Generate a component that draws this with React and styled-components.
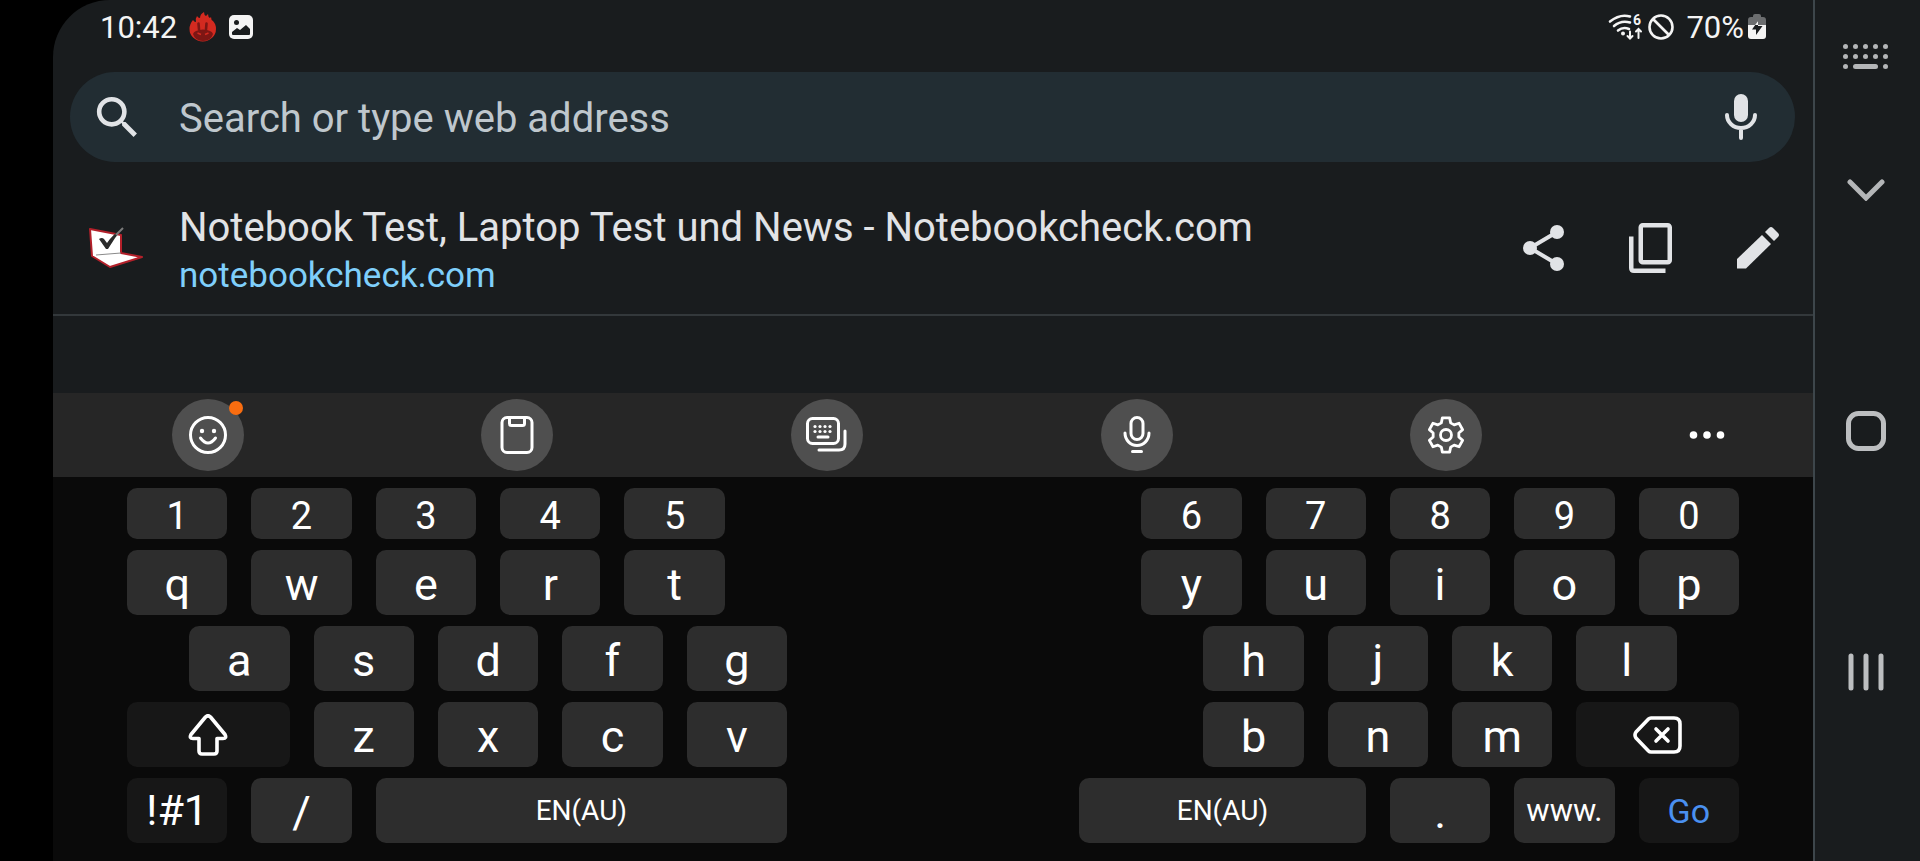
import React, {useState} from 'react';
import styled, {createGlobalStyle} from 'styled-components';


const leftKeys = [
    [
        {label: "1", col: 1, small: true}, {label: "2", col: 3, small: true}, {label: "3", col: 5, small: true},
        {label: "4", col: 7, small: true}, {label: "5", col: 9, small: true},
    ],
    [{label: "q", col: 1}, {label: "w", col: 3}, {label: "e", col: 5}, {label: "r", col: 7}, {label: "t", col: 9}],
    [{label: "a", col: 2}, {label: "s", col: 4}, {label: "d", col: 6}, {label: "f", col: 8}, {label: "g", col: 10}],
    [
        {label: "Shift", icon: "shift", col: 1, span: 3, dark: true},
        {label: "z", col: 4}, {label: "x", col: 6}, {label: "c", col: 8}, {label: "v", col: 10},
    ],
    [
        {label: "!#1", col: 1, dark: true, size: 43},
        {label: "/", col: 3},
        {label: "EN(AU)", col: 5, span: 7, size: 28},
    ],
];

const rightKeys = [
    [
        {label: "6", col: 2, small: true}, {label: "7", col: 4, small: true}, {label: "8", col: 6, small: true},
        {label: "9", col: 8, small: true}, {label: "0", col: 10, small: true},
    ],
    [{label: "y", col: 2}, {label: "u", col: 4}, {label: "i", col: 6}, {label: "o", col: 8}, {label: "p", col: 10}],
    [{label: "h", col: 3}, {label: "j", col: 5}, {label: "k", col: 7}, {label: "l", col: 9}],
    [
        {label: "b", col: 3}, {label: "n", col: 5}, {label: "m", col: 7},
        {label: "Backspace", icon: "backspace", col: 9, span: 3, dark: true},
    ],
    [
        {label: "EN(AU)", col: 1, span: 5, size: 28},
        {label: ".", col: 6},
        {label: "www.", col: 8, size: 31},
        {label: "Go", col: 10, dark: true, size: 34, color: "#4a90f0"},
    ],
];

// six teeth, one every 60 degrees
const gearPoints = () => {
    const points = [];
    for (let i = 0; i < 6; i++) {
        [[13, -21], [17.5, -12], [17.5, 12], [13, 21]].forEach(([r, offset]) => {
            const a = (i * 60 + offset - 90) * Math.PI / 180;
            points.push((20 + r * Math.cos(a)).toFixed(2) + "," + (20 + r * Math.sin(a)).toFixed(2));
        })
    }
    return points.join(" ");
}

const FlameIcon = () => (
    <svg width="28" height="30" viewBox="0 0 28 30" aria-hidden="true">
        <path d="M4 8q1 2 3 2-1-3 1-6 1 2 3 2 0-4 4-6 0 3 2 4l2-2q0 3 2 4l1-1q0 3 2 4 3 3 3 8a13.200 12.500 0 0 1-26.500 0q0-5 3.500-9z" fill="#d32a20"/>
        <path d="M4 22q1-4 10-4.500 9 .5 10 4.500-2 7-10 7T4 22z" fill="#7d1614"/>
        <path d="M9.500 11.500l.5 6M17.500 11.500l-.5 6" stroke="#7d1614" strokeWidth="2.600" strokeLinecap="round"/>
        <path d="M8.500 21l3.500 1.500M19.500 21L16 22.500" stroke="#d32a20" strokeWidth="1.500" fill="none"/>
    </svg>
)

const PictureIcon = () => (
    <svg width="24" height="24" viewBox="0 0 24 24" aria-hidden="true">
        <rect width="24" height="24" rx="5" fill="#f4f4f4"/>
        <circle cx="7.500" cy="7.500" r="2.500" fill="#191c1e"/>
        <path d="M3 19v-2l5-4 3 2 6-5 4 4v5q0 1-1 1H4q-1 0-1-1z" fill="#191c1e"/>
    </svg>
)

const WifiIcon = () => (
    <svg width="36" height="36" viewBox="0 -4 36 36" fill="none" stroke="#f4f4f4" strokeLinecap="round" aria-hidden="true">
        <path d="M2 8.500Q12 .5 22 3.500M6 13q7-6 16-3.500M10 17.500q5-4 11-1.500" strokeWidth="2.600"/>
        <circle cx="15" cy="20.500" r="2" fill="#f4f4f4" stroke="none"/>
        <path d="M22 18.500v6.500M19.500 23l2.500 2.500 2.500-2.500M30.500 25v-8M28 18.500l2.500-2.500 2.500 2.500" strokeWidth="2"/>
        <text x="25" y="12" fontSize="14" fontWeight="700" fill="#f4f4f4" stroke="none">6</text>
    </svg>
)

const BlockedIcon = () => (
    <svg width="26" height="26" viewBox="0 0 26 26" fill="none" stroke="#f4f4f4" strokeWidth="2.600" aria-hidden="true">
        <circle cx="13" cy="13" r="11.500"/>
        <path d="M5 5l16 16"/>
    </svg>
)

const BatteryIcon = () => (
    <svg width="18" height="26" viewBox="0 0 18 26" aria-hidden="true">
        <path d="M5 3V2q0-2 2-2h4q2 0 2 2v1h2q3 0 3 3v5H0V6q0-3 3-3z" fill="#6b6d6f"/>
        <path d="M0 11h18v11q0 3-3 3H3q-3 0-3-3z" fill="#f4f4f4"/>
        <path d="M10 7v5h4.500L8 21v-5.500H4z" fill="#191c1e"/>
        <path d="M10 7v4H7z" fill="#f4f4f4"/>
    </svg>
)

const SearchIcon = () => (
    <svg width="55" height="55" viewBox="0 0 24 24" fill="#e1e3e6" aria-hidden="true">
        <path d="M15.500 14h-.79l-.28-.27A6.471 6.471 0 0 0 16 9.500 6.500 6.500 0 1 0 9.500 16c1.610 0 3.090-.59 4.230-1.570l.27.28v.79l5 4.990L20.490 19l-4.990-5zm-6 0C7.010 14 5 11.990 5 9.500S7.010 5 9.500 5 14 7.010 14 9.500 11.990 14 9.500 14z"/>
    </svg>
)

const VoiceIcon = () => (
    <svg width="32" height="46" viewBox="0 0 32 46" fill="none" stroke="#e1e3e6" strokeWidth="4" strokeLinecap="round" aria-hidden="true">
        <rect x="9" y="0" width="14" height="28" rx="7" fill="#e1e3e6" stroke="none"/>
        <path d="M2 21a14 13 0 0 0 28 0M16 35v9"/>
    </svg>
)

const LaptopLogo = () => (
    <svg width="56" height="42" viewBox="-1 -1 56 42" aria-hidden="true">
        <path d="M1 1l31 6v18l21 4-32 10L3 28z" fill="#fff" stroke="#b3202a" strokeWidth="2" strokeLinejoin="round"/>
        <path d="M7 27l25-2" stroke="#8a8a8a" strokeWidth="1"/>
        <path d="M10 11q3-2 5 0l3 4Q24 6 34 0q-8 9-15 21h-2z" fill="#2b2b2b"/>
        <path d="M27 7l7-7" stroke="#7b7b7b" strokeWidth="2"/>
    </svg>
)

const ShareIcon = () => (
    <svg width="42" height="46" viewBox="0 0 42 46" fill="#e1e3e6" aria-hidden="true">
        <path d="M34 7L7 23l27 16" fill="none" stroke="#e1e3e6" strokeWidth="4"/>
        <circle cx="7" cy="23" r="7"/>
        <circle cx="34" cy="7" r="7"/>
        <circle cx="34" cy="39" r="7"/>
    </svg>
)

const CopyIcon = () => (
    <svg width="44" height="50" viewBox="0 0 44 50" fill="none" stroke="#e1e3e6" strokeWidth="4.500" aria-hidden="true">
        <rect x="11.750" y="2.250" width="29" height="37" rx="2"/>
        <path d="M2.250 13.500V45q0 2.750 2.750 2.750h31.500"/>
    </svg>
)

const PencilIcon = () => (
    <svg width="42" height="42" viewBox="0 0 42 42" fill="#e1e3e6" aria-hidden="true">
        <path d="M0 32L25 8l9 9L9 41.500H0z"/>
        <path d="M28 5l4-4q2-2 4 0l5 5q2 2 0 4l-4 4z"/>
    </svg>
)

const SmileIcon = () => (
    <svg width="40" height="40" viewBox="0 0 40 40" fill="none" stroke="#fff" strokeWidth="3" strokeLinecap="round" aria-hidden="true">
        <circle cx="20" cy="20" r="17.500"/>
        <circle cx="14" cy="16" r="2.200" fill="#fff" stroke="none"/>
        <circle cx="26" cy="16" r="2.200" fill="#fff" stroke="none"/>
        <path d="M12.500 23q7.500 10 15 0"/>
    </svg>
)

const ClipboardIcon = () => (
    <svg width="34" height="38" viewBox="0 0 34 38" fill="none" stroke="#fff" strokeWidth="3" aria-hidden="true">
        <rect x="2" y="1.500" width="30" height="35" rx="5"/>
        <path d="M9.500 2v5.500q0 2 2 2h11q2 0 2-2V2"/>
    </svg>
)

const KeyboardsIcon = () => (
    <svg width="42" height="36" viewBox="0 0 42 36" fill="none" stroke="#fff" strokeWidth="3" strokeLinecap="round" aria-hidden="true">
        <rect x="1.500" y="1.500" width="31" height="25" rx="5"/>
        <path d="M39 14v13q0 6-6 6H13M12 20h10"/>
        {[9, 14, 19, 24].map(x => (
            <React.Fragment key={x}>
                <circle cx={x} cy="9.500" r="1.600" fill="#fff" stroke="none"/>
                <circle cx={x} cy="14.500" r="1.600" fill="#fff" stroke="none"/>
            </React.Fragment>
        ))}
    </svg>
)

const MicIcon = () => (
    <svg width="28" height="38" viewBox="0 0 28 38" fill="none" stroke="#fff" strokeWidth="3" strokeLinecap="round" aria-hidden="true">
        <rect x="8" y="1.500" width="12" height="22" rx="6"/>
        <path d="M2 17a12 12.500 0 0 0 24 0M9.500 35.500h9"/>
    </svg>
)

const GearIcon = () => (
    <svg width="40" height="40" viewBox="0 0 40 40" fill="none" stroke="#fff" strokeWidth="2.800" strokeLinejoin="round" aria-hidden="true">
        <polygon points={gearPoints()}/>
        <circle cx="20" cy="20" r="5.500"/>
    </svg>
)

const MoreIcon = () => (
    <svg width="36" height="10" viewBox="0 0 36 10" fill="#fff" aria-hidden="true">
        <circle cx="4.500" cy="5" r="3.800"/>
        <circle cx="18" cy="5" r="3.800"/>
        <circle cx="31.500" cy="5" r="3.800"/>
    </svg>
)

const ShiftIcon = () => (
    <svg width="40" height="42" viewBox="0 0 40 42" fill="none" stroke="#fff" strokeWidth="3.600" strokeLinejoin="round" aria-hidden="true">
        <path d="M17.500 3q2.500-2.500 5 0L37 20.500q2 4-2 4h-6V37q0 3-3 3H14q-3 0-3-3V24.500H5q-4 0-2-4z"/>
    </svg>
)

const BackspaceIcon = () => (
    <svg width="50" height="38" viewBox="0 0 50 38" fill="none" stroke="#fff" strokeWidth="3.600" strokeLinecap="round" strokeLinejoin="round" aria-hidden="true">
        <path d="M18 2h23q6 0 6 6v22q0 6-6 6H18q-1.500 0-2.500-1L3 22q-2-3 0-6L15.500 3Q16.500 2 18 2z"/>
        <path d="M23 13l12 12M35 13L23 25"/>
    </svg>
)

const HideKeyboardIcon = () => (
    <svg width="45" height="25" viewBox="0 0 45 25" fill="#b4b6b8" aria-hidden="true">
        {[2.5, 12.5, 22.5, 32.5, 42.5].map(x => (
            <React.Fragment key={x}>
                <circle cx={x} cy="2.500" r="2.500"/>
                <circle cx={x} cy="12.500" r="2.500"/>
            </React.Fragment>
        ))}
        <circle cx="2.500" cy="22.500" r="2.500"/>
        <rect x="10" y="20" width="25" height="5" rx="2.500"/>
        <circle cx="42.500" cy="22.500" r="2.500"/>
    </svg>
)

const DownIcon = () => (
    <svg width="38" height="22" viewBox="0 0 38 22" fill="none" stroke="#b4b6b8" strokeWidth="5" strokeLinecap="round" aria-hidden="true">
        <path d="M3 3l16 16L35 3"/>
    </svg>
)

const HomeIcon = () => (
    <svg width="40" height="40" viewBox="0 0 40 40" fill="none" stroke="#bcbec0" strokeWidth="5" aria-hidden="true">
        <rect x="2.500" y="2.500" width="35" height="35" rx="10"/>
    </svg>
)

const RecentsIcon = () => (
    <svg width="36" height="38" viewBox="0 0 36 38" fill="none" stroke="#bcbec0" strokeWidth="5" strokeLinecap="round" aria-hidden="true">
        <path d="M3 3v32M18 3v32M33 3v32"/>
    </svg>
)

const keyIcons = {shift: <ShiftIcon/>, backspace: <BackspaceIcon/>};

const KeyHalf = ({rows, onPress}) => (
    <SHalf>
        {rows.map((row, i) => row.map(key => (
            <SKey
                key={key.label} type="button" aria-label={key.icon ? key.label : undefined}
                $row={i + 1} $col={key.col} $span={key.span || 2} $dark={key.dark}
                $size={key.size || (key.small ? 38 : 45)} $low={!key.size && !key.icon} $color={key.color}
                onClick={() => onPress(key)}
            >
                {key.icon ? keyIcons[key.icon] : key.label}
            </SKey>
        )))}
    </SHalf>
)


const App = () => {

    const [address, setAddress] = useState("");

    const pressKey = (key) => {
        if(key.icon === "backspace") {
            setAddress(address.slice(0, -1))
        } else if(key.label === "EN(AU)") {
            setAddress(address + " ")
        } else if(!key.dark) {
            setAddress(address + key.label)
        }
    }

    return(
        <>
            <GlobalStyle/>
            <SPage>
                <SScreen>
                    <SStatusBar>
                        <SStatusGroup $gap={12}>
                            <span>10:42</span>
                            <FlameIcon/>
                            <PictureIcon/>
                        </SStatusGroup>
                        <SStatusGroup $gap={4}>
                            <WifiIcon/>
                            <BlockedIcon/>
                            <SPercent>70%</SPercent>
                            <BatteryIcon/>
                        </SStatusGroup>
                    </SStatusBar>

                    <SSearchBar>
                        <SearchIcon/>
                        <SAddress
                            type="text" aria-label="Search or type web address" placeholder="Search or type web address"
                            value={address} onChange={(event) => setAddress(event.target.value)}
                        />
                        <SPlainButton type="button" aria-label="Voice search"><VoiceIcon/></SPlainButton>
                    </SSearchBar>

                    <SSuggestion>
                        <LaptopLogo/>
                        <SSuggestionText>
                            <STitle>Notebook Test, Laptop Test und News - Notebookcheck.com</STitle>
                            <SLink href="#notebookcheck">notebookcheck.com</SLink>
                        </SSuggestionText>
                        <SAction type="button" aria-label="Share"><ShareIcon/></SAction>
                        <SAction type="button" aria-label="Copy"><CopyIcon/></SAction>
                        <SAction type="button" aria-label="Edit"><PencilIcon/></SAction>
                    </SSuggestion>

                    <SToolbar>
                        <STool type="button" aria-label="Emoji"><SmileIcon/><SDot/></STool>
                        <STool type="button" aria-label="Clipboard"><ClipboardIcon/></STool>
                        <STool type="button" aria-label="Keyboard modes"><KeyboardsIcon/></STool>
                        <STool type="button" aria-label="Voice input"><MicIcon/></STool>
                        <STool type="button" aria-label="Settings"><GearIcon/></STool>
                        <SPlainButton type="button" aria-label="More"><MoreIcon/></SPlainButton>
                    </SToolbar>

                    <SKeyboard>
                        <KeyHalf rows={leftKeys} onPress={pressKey}/>
                        <KeyHalf rows={rightKeys} onPress={pressKey}/>
                    </SKeyboard>
                </SScreen>

                <SNavBar>
                    <SNavButton type="button" aria-label="Switch keyboard" $end><HideKeyboardIcon/></SNavButton>
                    <SNavButton type="button" aria-label="Hide keyboard"><DownIcon/></SNavButton>
                    <SNavButton type="button" aria-label="Home"><HomeIcon/></SNavButton>
                    <SNavButton type="button" aria-label="Recent apps"><RecentsIcon/></SNavButton>
                </SNavBar>
            </SPage>
        </>
    )
}

export default App;


const GlobalStyle = createGlobalStyle`
  *, *::before, *::after {
    box-sizing: border-box;
  }
  body {
    margin: 0;
    background: #000;
    color: #e1e3e6;
    font-family: Roboto, "Liberation Sans", sans-serif;
  }
  button, input {
    margin: 0;
    padding: 0;
    border: none;
    background: none;
    color: inherit;
    font-family: inherit;
  }
  button {
    cursor: pointer;
  }
  svg {
    display: block;
    flex: none;
  }
`;

const SPage = styled.div`
  display: flex;
  min-height: 100vh;
  padding-left: 53px;
  background: #000;
`;

const SScreen = styled.main`
  display: flex;
  flex-direction: column;
  flex: 1;
  min-width: 0;
  overflow: hidden;
  border-top-left-radius: 57px;
  background: #191c1e;
`;

const SStatusBar = styled.header`
  display: flex;
  justify-content: space-between;
  height: 54px;
  padding: 0 47px;
  color: #f4f4f4;
  font-size: 31px;
`;

const SStatusGroup = styled.div`
  display: flex;
  align-items: center;
  gap: ${props => props.$gap}px;
`;

const SPercent = styled.span`
  padding-left: 8px;
`;

const SSearchBar = styled.div`
  display: flex;
  align-items: center;
  height: 90px;
  margin: 18px 18px 0 17px;
  padding: 0 38px 0 20px;
  border-radius: 45px;
  background: #222d33;
`;

const SAddress = styled.input`
  flex: 1;
  min-width: 0;
  height: 64px;
  margin-left: 34px;
  padding-top: 2px;
  outline: none;
  font-size: 40px;

  &::placeholder {
    color: #bfc7cd;
    opacity: 1;
  }
`;

const SPlainButton = styled.button`
  display: flex;
  align-items: center;
  justify-content: center;
`;

const SSuggestion = styled.section`
  display: flex;
  align-items: center;
  height: 134px;
  margin-top: 20px;
  padding: 0 2px 0 35px;
  border-bottom: 2px solid #33383b;
`;

const SSuggestionText = styled.div`
  display: flex;
  flex: 1;
  flex-direction: column;
  align-items: flex-start;
  min-width: 0;
  margin-left: 35px;
  padding-top: 6px;
  white-space: nowrap;
`;

const STitle = styled.span`
  font-size: 40px;
  line-height: 50px;
`;

const SLink = styled.a`
  color: #7fcffb;
  font-size: 35px;
  line-height: 46px;
  text-decoration: none;
`;

const SAction = styled.button`
  display: flex;
  align-items: center;
  justify-content: center;
  width: 107px;
  height: 80px;
`;

const SToolbar = styled.div`
  display: grid;
  grid-template-columns: repeat(5, 1fr) 212px;
  align-items: center;
  justify-items: center;
  height: 84px;
  margin-top: auto;
  background: #262626;
`;

const STool = styled.button`
  position: relative;
  display: flex;
  align-items: center;
  justify-content: center;
  width: 72px;
  height: 72px;
  border-radius: 50%;
  background: #4f4f4f;
`;

const SDot = styled.span`
  position: absolute;
  top: 2px;
  right: 1px;
  width: 14px;
  height: 14px;
  border-radius: 50%;
  background: #f96d10;
`;

const SKeyboard = styled.div`
  display: grid;
  grid-template-columns: 1fr 1fr;
  column-gap: 292px;
  padding: 11px 74px 18px;
  background: #0a0a0a;
`;

const SHalf = styled.div`
  display: grid;
  grid-template-columns: repeat(11, minmax(0, 1fr));
  grid-template-rows: 51px repeat(4, 65px);
  gap: 11px 24px;
`;

const SKey = styled.button`
  display: flex;
  align-items: center;
  justify-content: center;
  grid-row: ${props => props.$row};
  grid-column: ${props => props.$col} / span ${props => props.$span};
  padding-top: ${props => props.$low ? 4 : 0}px;
  border-radius: 10px;
  background: ${props => props.$dark ? "#171717" : "#2d2d2d"};
  color: ${props => props.$color || "#fff"};
  font-size: ${props => props.$size}px;
  line-height: 1;
`;

const SNavBar = styled.nav`
  display: grid;
  grid-template-rows: 69px repeat(3, 1fr);
  flex: none;
  width: 107px;
  padding: 0 4px 69px 0;
  border-left: 2px solid #3d464b;
  background: #191c1e;
`;

const SNavButton = styled.button`
  display: flex;
  align-items: ${props => props.$end ? "flex-end" : "center"};
  justify-content: center;
`;
